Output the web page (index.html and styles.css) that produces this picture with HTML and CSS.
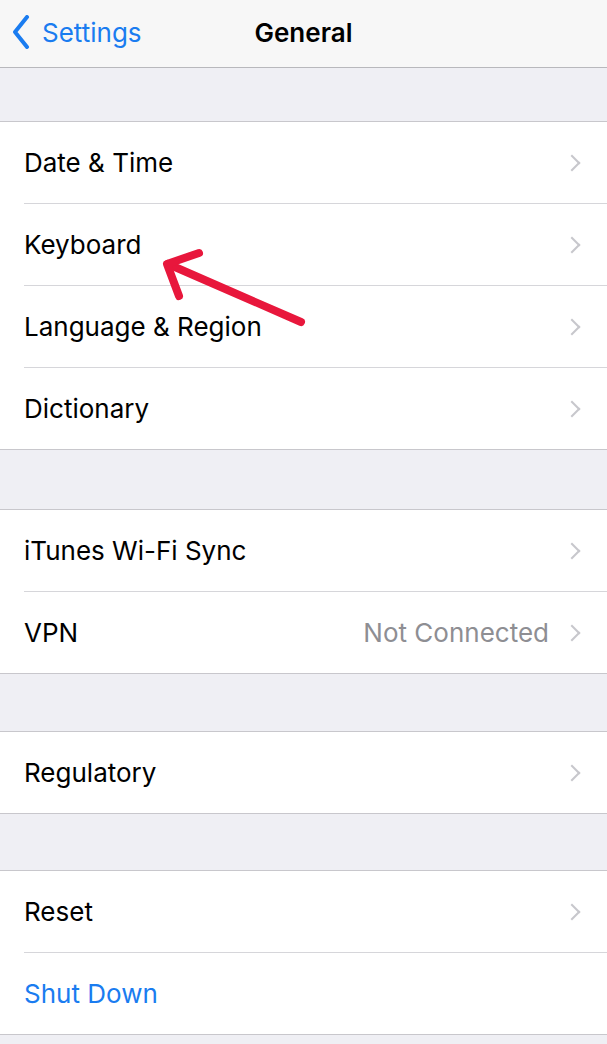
FILE: index.html
```html
<!DOCTYPE html>
<html lang="en">
<head>
    <meta charset="UTF-8">
    <meta name="viewport" content="width=device-width, initial-scale=1.0">
    <title>General</title>
    <link rel="stylesheet" href="styles.css">
</head>
<body>
    <div class="navbar">
        <div class="back">
            <svg class="back-icon" width="18" height="34" viewBox="0 0 18 34">
                <path d="M15 2 L3 17 L15 32" fill="none" stroke="#1a7cf0" stroke-width="4" stroke-linecap="round" stroke-linejoin="round"/>
            </svg>
            <span>Settings</span>
        </div>
        <div class="title">General</div>
    </div>

    <div class="group group-first">
        <div class="row"><div class="row-body"><span class="label">Date &amp; Time</span><span class="chevron"></span></div></div>
        <div class="row"><div class="row-body"><span class="label">Keyboard</span><span class="chevron"></span></div></div>
        <div class="row"><div class="row-body"><span class="label">Language &amp; Region</span><span class="chevron"></span></div></div>
        <div class="row"><div class="row-body"><span class="label">Dictionary</span><span class="chevron"></span></div></div>
    </div>

    <div class="group group-second">
        <div class="row"><div class="row-body"><span class="label">iTunes Wi-Fi Sync</span><span class="chevron"></span></div></div>
        <div class="row"><div class="row-body"><span class="label">VPN</span><span class="detail">Not Connected</span><span class="chevron"></span></div></div>
    </div>

    <div class="group">
        <div class="row"><div class="row-body"><span class="label">Regulatory</span><span class="chevron"></span></div></div>
    </div>

    <div class="group group-last">
        <div class="row"><div class="row-body"><span class="label">Reset</span><span class="chevron"></span></div></div>
        <div class="row"><div class="row-body"><span class="label label-action">Shut Down</span></div></div>
    </div>

    <!-- annotation arrow drawn over the list -->
    <svg class="annotation" width="607" height="1044" viewBox="0 0 607 1044">
        <g fill="none" stroke="#e8173c" stroke-width="8" stroke-linecap="round" stroke-linejoin="round">
            <path d="M301 322 L168 264"/>
            <path d="M199 253 L167 264 L179 296"/>
        </g>
    </svg>
</body>
</html>
```

FILE: styles.css
```css
body {
    margin: 0;
    background-color: #efeff4;
    font-family: Inter, "Noto Sans", sans-serif;
    color: #000000;
    position: relative;
    min-height: 1044px;
}
.navbar {
    height: 67px;
    background-color: #f7f7f7;
    border-bottom: 1px solid #b8b8bc;
    display: flex;
    align-items: center;
    justify-content: center;
    position: relative;
}
.back {
    position: absolute;
    left: 12px;
    top: 15px;
    display: flex;
    align-items: center;
    gap: 12px;
    color: #1a7cf0;
    font-size: 26px;
}
.title {
    font-size: 26px;
    font-weight: 600;
    margin-top: -3px;
}
.group {
    background-color: #ffffff;
    border-top: 1px solid #c8c7cc;
    border-bottom: 1px solid #c8c7cc;
    margin-top: 57px;
}
.group-first {
    margin-top: 53px;
}
.group-second {
    margin-top: 59px;
}
.group-last {
    margin-top: 56px;
}
.row {
    padding-left: 24px;
}
.row-body {
    height: 81px;
    display: flex;
    align-items: center;
    padding-right: 25px;
    border-bottom: 1px solid #d6d6da;
}
.row:last-child .row-body {
    border-bottom: none;
}
.label {
    flex: 1;
    font-size: 26px;
}
.label-action {
    color: #1a7cf0;
}
.detail {
    color: #8e8e93;
    font-size: 26px;
    margin-right: 17px;
}
.chevron {
    width: 10px;
    height: 10px;
    border-top: 2.5px solid #c7c7cc;
    border-right: 2.5px solid #c7c7cc;
    transform: rotate(45deg);
    margin-right: 4px;
}
.annotation {
    position: absolute;
    left: 0;
    top: 0;
    pointer-events: none;
}
```
